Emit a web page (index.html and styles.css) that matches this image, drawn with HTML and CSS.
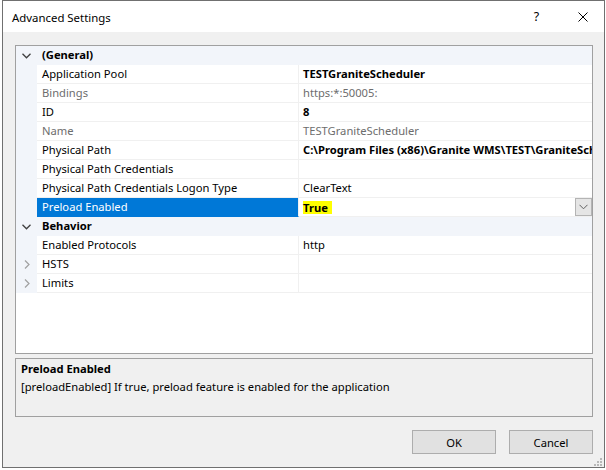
FILE: index.html
```html
<!DOCTYPE html>
<html>
<head>
<meta charset="utf-8">
<link rel="stylesheet" href="styles.css">
</head>
<body>
<div class="window">
  <div class="titlebar">
    <div class="title">Advanced Settings</div>
    <div class="tbtn help">?</div>
    <div class="tbtn close">
      <svg width="10" height="10" viewBox="0 0 10 10"><path d="M0.5 0.5 L9.5 9.5 M9.5 0.5 L0.5 9.5" stroke="#000" stroke-width="1" fill="none"/></svg>
    </div>
  </div>
  <div class="client">
    <div class="grid">
      <div class="row cat">
        <div class="gut"><svg class="chev" width="9" height="6" viewBox="0 0 9 6"><path d="M0.5 0.8 L4.5 4.8 L8.5 0.8" stroke="#404040" stroke-width="1.3" fill="none"/></svg></div>
        <div class="catname">(General)</div>
      </div>
      <div class="row"><div class="gut"></div><div class="name">Application Pool</div><div class="val b">TESTGraniteScheduler</div></div>
      <div class="row dis"><div class="gut"></div><div class="name">Bindings</div><div class="val">https:*:50005:</div></div>
      <div class="row"><div class="gut"></div><div class="name">ID</div><div class="val b">8</div></div>
      <div class="row dis"><div class="gut"></div><div class="name">Name</div><div class="val">TESTGraniteScheduler</div></div>
      <div class="row"><div class="gut"></div><div class="name">Physical Path</div><div class="val b">C:\Program Files (x86)\Granite WMS\TEST\GraniteScheduler</div></div>
      <div class="row"><div class="gut"></div><div class="name">Physical Path Credentials</div><div class="val"></div></div>
      <div class="row"><div class="gut"></div><div class="name">Physical Path Credentials Logon Type</div><div class="val">ClearText</div></div>
      <div class="row sel"><div class="gut"></div><div class="name">Preload Enabled</div><div class="val b"><span class="hl">True</span><span class="dd"><svg width="9" height="6" viewBox="0 0 9 6"><path d="M0.5 0.8 L4.5 4.8 L8.5 0.8" stroke="#606060" stroke-width="1" fill="none"/></svg></span></div></div>
      <div class="row cat">
        <div class="gut"><svg class="chev" width="9" height="6" viewBox="0 0 9 6"><path d="M0.5 0.8 L4.5 4.8 L8.5 0.8" stroke="#404040" stroke-width="1.3" fill="none"/></svg></div>
        <div class="catname">Behavior</div>
      </div>
      <div class="row"><div class="gut"></div><div class="name">Enabled Protocols</div><div class="val">http</div></div>
      <div class="row"><div class="gut"><svg class="chev" width="6" height="9" viewBox="0 0 6 9"><path d="M1 0.5 L5 4.5 L1 8.5" stroke="#a0a0a0" stroke-width="1.2" fill="none"/></svg></div><div class="name">HSTS</div><div class="val"></div></div>
      <div class="row"><div class="gut"><svg class="chev" width="6" height="9" viewBox="0 0 6 9"><path d="M1 0.5 L5 4.5 L1 8.5" stroke="#a0a0a0" stroke-width="1.2" fill="none"/></svg></div><div class="name">Limits</div><div class="val"></div></div>
    </div>
    <div class="desc">
      <div class="dtitle">Preload Enabled</div>
      <div class="dtext">[preloadEnabled] If true, preload feature is enabled for the application</div>
    </div>
    <div class="buttons">
      <div class="btn">OK</div>
      <div class="btn">Cancel</div>
    </div>
  </div>
  <svg class="grip" width="8" height="8" viewBox="0 0 8 8">
    <rect x="6" y="0" width="2" height="2" fill="#b8b8b8"/>
    <rect x="3" y="3" width="2" height="2" fill="#b8b8b8"/>
    <rect x="6" y="3" width="2" height="2" fill="#b8b8b8"/>
    <rect x="0" y="6" width="2" height="2" fill="#b8b8b8"/>
    <rect x="3" y="6" width="2" height="2" fill="#b8b8b8"/>
    <rect x="6" y="6" width="2" height="2" fill="#b8b8b8"/>
  </svg>
</div>
</body>
</html>
```
FILE: styles.css
```css
html, body {
  margin: 0;
  padding: 0;
  background: #ffffff;
}
body {
  font-family: "Noto Sans", "Open Sans", sans-serif;
  font-size: 11.2px;
  color: #000;
}
.window {
  position: relative;
  box-sizing: border-box;
  margin-left: 2px;
  width: 603px;
  height: 468px;
  border: 1px solid #707070;
  display: flex;
  flex-direction: column;
}
.titlebar {
  height: 31px;
  background: #fff;
  display: flex;
  align-items: center;
}
.title {
  flex: 1;
  padding-left: 9px;
  padding-top: 1px;
  font-size: 11.4px;
}
.tbtn {
  width: 46px;
  height: 31px;
  display: flex;
  align-items: center;
  justify-content: center;
}
.help {
  font-size: 12.5px;
  padding-left: 3px;
  box-sizing: border-box;
  color: #000;
}
.close {
  padding-left: 3px;
  box-sizing: border-box;
}
.client {
  flex: 1;
  background: #f0f0f0;
  padding: 13px 11px 0 12px;
  display: flex;
  flex-direction: column;
}
.grid {
  box-sizing: border-box;
  height: 309px;
  border: 1px solid #a0a0a0;
  background: #fff;
  overflow: hidden;
}
.row {
  display: grid;
  grid-template-columns: 21px 262px 1fr;
  height: 19px;
  line-height: 18px;
}
.gut {
  background: #f2f5fa;
  display: flex;
  align-items: center;
  justify-content: center;
}
.name {
  box-sizing: border-box;
  padding-left: 5px;
  border-right: 1px solid #f0f0f0;
  border-bottom: 1px solid #f0f0f0;
  white-space: nowrap;
  overflow: hidden;
  line-height: 18px;
}
.val {
  box-sizing: border-box;
  padding-left: 4px;
  border-bottom: 1px solid #f0f0f0;
  white-space: nowrap;
  overflow: hidden;
  position: relative;
  display: flex;
  align-items: center;
}
.b { font-weight: bold; }
.dis .name, .dis .val { color: #6d6d6d; }
.cat {
  background: #f2f5fa;
}
.catname {
  grid-column: 2 / 4;
  padding-left: 5px;
  line-height: 18px;
  font-weight: bold;
}
.sel .name {
  background: #0078d7;
  color: #fff;
  border-bottom-color: #0078d7;
}
.hl {
  background: #ffff00;
  padding: 0 4px 0 0;
  line-height: 13px;
}
.dd {
  position: absolute;
  right: 0;
  top: 0;
  box-sizing: border-box;
  width: 17px;
  height: 18px;
  background: #e5e5e5;
  border: 1px solid #b4b4b4;
  display: flex;
  align-items: center;
  justify-content: center;
}
.desc {
  box-sizing: border-box;
  margin-top: 4px;
  height: 59px;
  border: 1px solid #a0a0a0;
  padding: 1px 0 0 5px;
  line-height: 18px;
}
.dtitle { font-weight: bold; }
.buttons {
  margin-top: 13px;
  display: flex;
  justify-content: flex-end;
  gap: 13px;
}
.btn {
  box-sizing: border-box;
  width: 84px;
  height: 24px;
  background: #e1e1e1;
  border: 1px solid #adadad;
  display: flex;
  align-items: center;
  justify-content: center;
}
.grip {
  position: absolute;
  right: 2px;
  bottom: 1px;
}
```
